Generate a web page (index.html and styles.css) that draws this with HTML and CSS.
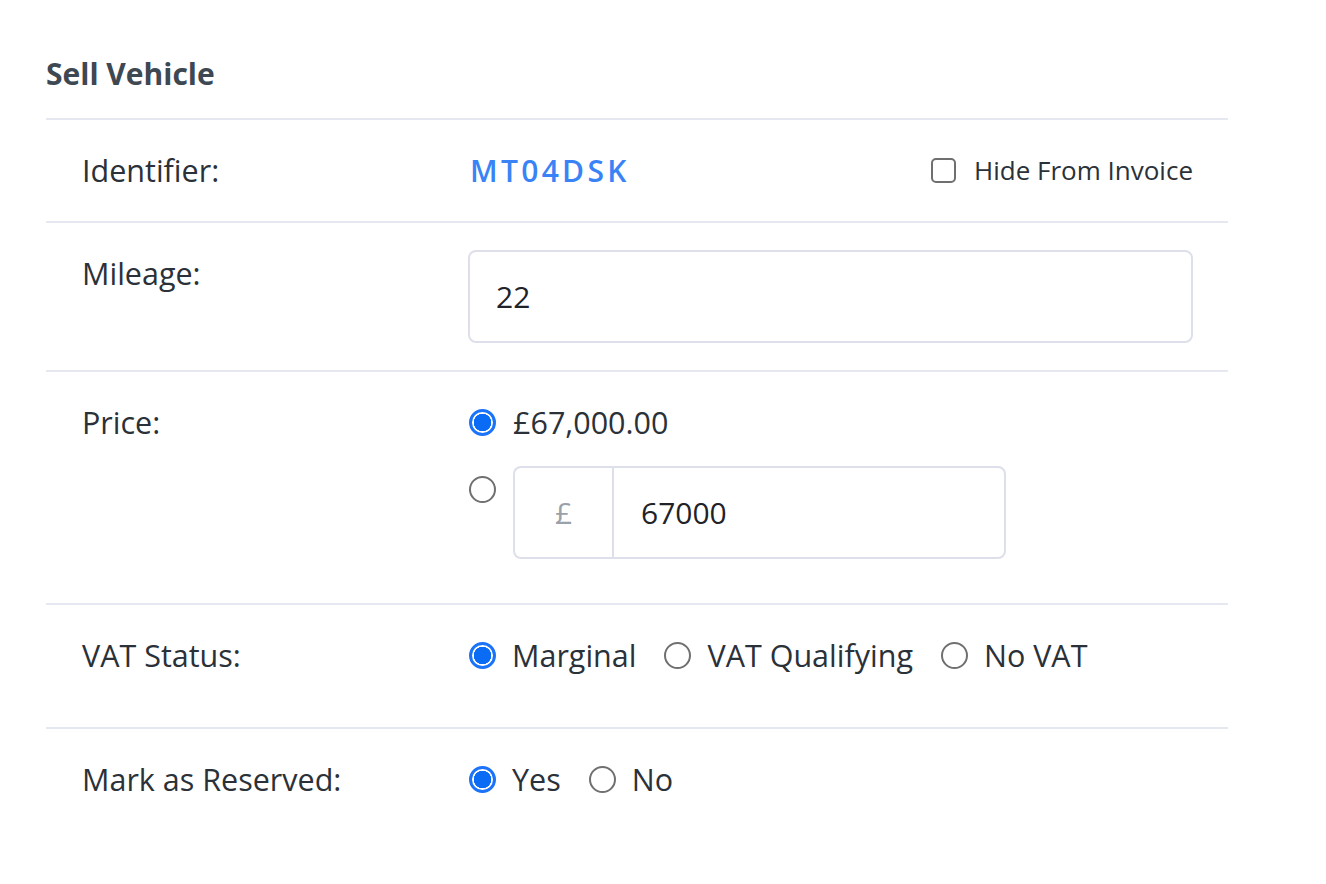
FILE: index.html
```html
<!DOCTYPE html>
<html>
<head>
<meta charset="utf-8">
<link rel="stylesheet" href="styles.css">
</head>
<body>
<div class="panel">
  <h2 class="title">Sell Vehicle</h2>
  <div class="row">
    <div class="label">Identifier:</div>
    <div class="value split">
      <span class="ident">MT04DSK</span>
      <label class="check"><span class="box"></span>Hide From Invoice</label>
    </div>
  </div>
  <div class="row">
    <div class="label">Mileage:</div>
    <div class="value">
      <div class="input full">22</div>
    </div>
  </div>
  <div class="row">
    <div class="label">Price:</div>
    <div class="value">
      <div class="opt stack"><span class="radio on"></span><span>£67,000.00</span></div>
      <div class="opt stack last">
        <span class="radio"></span>
        <div class="group">
          <div class="prefix">£</div>
          <div class="input amount">67000</div>
        </div>
      </div>
    </div>
  </div>
  <div class="row">
    <div class="label">VAT Status:</div>
    <div class="value inline last">
      <span class="opt"><span class="radio on"></span>Marginal</span>
      <span class="opt"><span class="radio"></span>VAT Qualifying</span>
      <span class="opt"><span class="radio"></span>No VAT</span>
    </div>
  </div>
  <div class="row noline">
    <div class="label">Mark as Reserved:</div>
    <div class="value inline last">
      <span class="opt"><span class="radio on"></span>Yes</span>
      <span class="opt"><span class="radio"></span>No</span>
    </div>
  </div>
</div>
</body>
</html>
```
FILE: styles.css
```css
* { box-sizing: border-box; }
body {
  margin: 0;
  background: #fff;
  font-family: "Open Sans", "Liberation Sans", sans-serif;
  color: #2b3138;
}
.panel {
  width: 1182px;
  margin-left: 46px;
  padding-top: 52px;
}
.title {
  margin: 0;
  font-size: 30px;
  font-weight: 700;
  color: #3e4853;
  line-height: 44px;
  padding-bottom: 22px;
  border-bottom: 2px solid #e6e8f1;
}
.row {
  display: flex;
  padding: 27px 35px 27px 36px;
  border-bottom: 2px solid #e6e8f1;
  font-size: 30.5px;
  line-height: 47px;
}
.row.noline { border-bottom: none; }
.label {
  width: 386px;
  flex: none;
}
.value { flex: 1; }
.split {
  display: flex;
  justify-content: space-between;
  align-items: center;
}
.ident {
  color: #3a83f6;
  font-weight: 600;
  font-size: 30px;
  letter-spacing: 3.3px;
  padding-left: 2px;
}
.check {
  display: flex;
  align-items: center;
  font-size: 26px;
}
.box {
  width: 25px;
  height: 25px;
  border: 2px solid #6f6f6f;
  border-radius: 5px;
  margin-right: 18px;
}
.input {
  border: 2px solid #dde0ea;
  border-radius: 8px;
  height: 93px;
  padding-left: 26px;
  display: flex;
  align-items: center;
  color: #1f2327;
  font-size: 30px;
}
.full { width: 100%; }
.opt {
  display: flex;
  align-items: center;
}
.stack { margin-bottom: 20px; }
.stack.last { align-items: flex-start; margin-bottom: 17px; }
.stack.last .radio { margin-top: 10px; }
.inline { display: flex; margin-bottom: 21px; }
.inline .opt { margin-right: 27px; }
.inline .radio { margin-right: 16px; }
.radio {
  width: 27px;
  height: 27px;
  border-radius: 50%;
  border: 2px solid #707070;
  margin-right: 17px;
  flex: none;
  margin-left: 1px;
}
.radio.on {
  border: 3px solid #1a73f8;
  background: radial-gradient(circle, #0a6cf5 0 8.5px, #fff 9px);
}
.group { display: flex; }
.prefix {
  width: 99px;
  height: 93px;
  border: 2px solid #dde0ea;
  border-right: none;
  border-radius: 8px 0 0 8px;
  display: flex;
  align-items: center;
  justify-content: center;
  color: #9aa1ab;
  font-size: 30px;
}
.amount {
  width: 394px;
  border-radius: 0 8px 8px 0;
  padding-left: 27px;
}
```
